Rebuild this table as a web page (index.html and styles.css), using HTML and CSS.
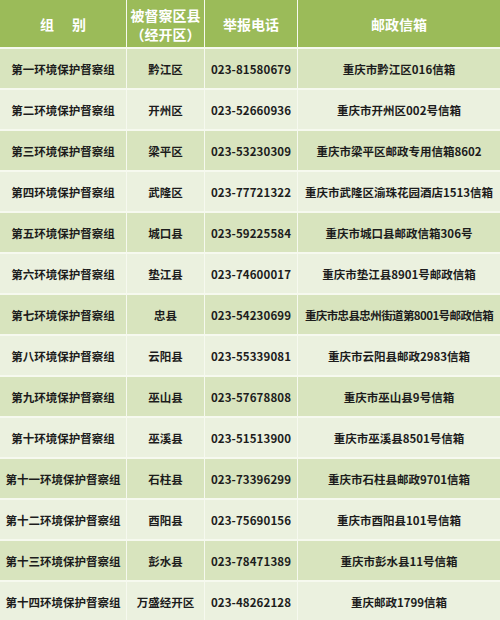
FILE: index.html
```html
<!DOCTYPE html>
<html lang="zh-CN">
<head>
<meta charset="utf-8">
<title>环境保护督察组</title>
<link rel="stylesheet" href="styles.css">
</head>
<body>
<div class="grid">
  <div class="hd c1">组<span class="gap">　</span>别</div>
  <div class="hd two"><span class="ln">被督察区县</span><span class="ln">（经开区）</span></div>
  <div class="hd">举报电话</div>
  <div class="hd">邮政信箱</div>

  <div class="d">第一环境保护督察组</div><div class="d">黔江区</div><div class="d num">023-81580679</div><div class="d">重庆市黔江区016信箱</div>
  <div class="l">第二环境保护督察组</div><div class="l">开州区</div><div class="l num">023-52660936</div><div class="l">重庆市开州区002号信箱</div>
  <div class="d">第三环境保护督察组</div><div class="d">梁平区</div><div class="d num">023-53230309</div><div class="d">重庆市梁平区邮政专用信箱8602</div>
  <div class="l">第四环境保护督察组</div><div class="l">武隆区</div><div class="l num">023-77721322</div><div class="l">重庆市武隆区渝珠花园酒店1513信箱</div>
  <div class="d">第五环境保护督察组</div><div class="d">城口县</div><div class="d num">023-59225584</div><div class="d">重庆市城口县邮政信箱306号</div>
  <div class="l">第六环境保护督察组</div><div class="l">垫江县</div><div class="l num">023-74600017</div><div class="l">重庆市垫江县8901号邮政信箱</div>
  <div class="d">第七环境保护督察组</div><div class="d">忠县</div><div class="d num">023-54230699</div><div class="d long">重庆市忠县忠州街道第8001号邮政信箱</div>
  <div class="l">第八环境保护督察组</div><div class="l">云阳县</div><div class="l num">023-55339081</div><div class="l">重庆市云阳县邮政2983信箱</div>
  <div class="d">第九环境保护督察组</div><div class="d">巫山县</div><div class="d num">023-57678808</div><div class="d">重庆市巫山县9号信箱</div>
  <div class="l">第十环境保护督察组</div><div class="l">巫溪县</div><div class="l num">023-51513900</div><div class="l">重庆市巫溪县8501号信箱</div>
  <div class="d">第十一环境保护督察组</div><div class="d">石柱县</div><div class="d num">023-73396299</div><div class="d">重庆市石柱县邮政9701信箱</div>
  <div class="l">第十二环境保护督察组</div><div class="l">酉阳县</div><div class="l num">023-75690156</div><div class="l">重庆市酉阳县101号信箱</div>
  <div class="d">第十三环境保护督察组</div><div class="d">彭水县</div><div class="d num">023-78471389</div><div class="d">重庆市彭水县11号信箱</div>
  <div class="l">第十四环境保护督察组</div><div class="l">万盛经开区</div><div class="l num">023-48262128</div><div class="l">重庆邮政1799信箱</div>
</div>
</body>
</html>
```

FILE: styles.css
```css
html, body {
  margin: 0;
  padding: 0;
  background: #ffffff;
}
body {
  width: 500px;
  height: 620px;
  overflow: hidden;
  font-family: "Noto Sans CJK SC", "Noto Sans", sans-serif;
}
.grid {
  display: grid;
  grid-template-columns: 126px 77px 92px 1fr;
  grid-template-rows: 47px repeat(14, 39px);
  column-gap: 1px;
  row-gap: 2px;
  background: #f6f9ef;
}
.grid > div {
  display: flex;
  align-items: center;
  justify-content: center;
  text-align: center;
  white-space: nowrap;
  overflow: hidden;
}
.hd {
  background: #9bbb59;
  color: #ffffff;
  font-weight: bold;
  font-size: 14px;
  line-height: 20px;
}
.grid > .two {
  flex-direction: column;
  padding-top: 2px;
}
.ln {
  display: block;
  line-height: 19px;
}
.gap {
  display: inline-block;
  width: 18px;
}
.d, .l {
  color: #1c1c1c;
  font-weight: bold;
  font-size: 11.5px;
}
.d { background: #d8e4be; }
.l { background: #ebf1df; }
.num { letter-spacing: 0.1px; }
.long { letter-spacing: -0.6px; font-size: 11.5px; }
```
